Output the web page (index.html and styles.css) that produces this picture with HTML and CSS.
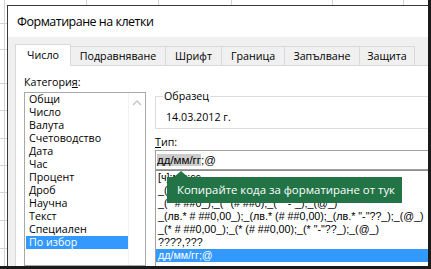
FILE: index.html
```html
<!DOCTYPE html>
<html lang="bg">
<head>
<meta charset="utf-8">
<title>Форматиране на клетки</title>
<link rel="stylesheet" href="styles.css">
</head>
<body>
<div class="frame">
  <div class="dialog">
    <div class="titlebar">Форматиране на клетки</div>
    <div class="dlg-body">
      <div class="tabs">
        <div class="tab active">Число</div>
        <div class="tab">Подравняване</div>
        <div class="tab">Шрифт</div>
        <div class="tab">Граница</div>
        <div class="tab">Запълване</div>
        <div class="tab">Защита</div>
      </div>
      <div class="panel">
        <div class="col-left">
          <div class="label">Категори<u>я</u>:</div>
          <div class="listbox">
            <ul class="cat-list">
              <li>Общи</li>
              <li>Число</li>
              <li>Валута</li>
              <li>Счетоводство</li>
              <li>Дата</li>
              <li>Час</li>
              <li>Процент</li>
              <li>Дроб</li>
              <li>Научна</li>
              <li>Текст</li>
              <li>Специален</li>
              <li class="sel">По избор</li>
            </ul>
            <div class="vscroll">
              <svg class="chev" width="10" height="6" viewBox="0 0 10 6"><path d="M1 5 L5 1 L9 5" fill="none" stroke="#c4c4c4" stroke-width="1.4"/></svg>
            </div>
          </div>
        </div>
        <div class="col-right">
          <fieldset class="sample">
            <legend>Образец</legend>
            <div class="sample-val">14.03.2012 г.</div>
          </fieldset>
          <div class="label type-label"><u>Т</u>ип:</div>
          <div class="type-input"><span class="seltext">дд/мм/гг</span>;@</div>
          <ul class="fmt-list">
            <li>[ч]:мм:сс</li>
            <li>_(лв.* # ##0_);_(лв.* (# ##0);_(лв.* "-"_);_(@_)</li>
            <li>_(* # ##0_);_(* (# ##0);_(* "-"_);_(@_)</li>
            <li>_(лв.* # ##0,00_);_(лв.* (# ##0,00);_(лв.* "-"??_);_(@_)</li>
            <li>_(* # ##0,00_);_(* (# ##0,00);_(* "-"??_);_(@_)</li>
            <li>????,???</li>
            <li class="sel">дд/мм/гг;@</li>
          </ul>
        </div>
      </div>
    </div>
  </div>
  <div class="tooltip">Копирайте кода за форматиране от тук</div>
</div>
</body>
</html>
```

FILE: styles.css
```css
* { box-sizing: border-box; }

html, body {
  margin: 0;
  padding: 0;
  background: #fff;
}

.frame {
  position: relative;
  width: 431px;
  height: 269px;
  overflow: hidden;
  border-right: 3px solid #1a1a1a;
  border-bottom: 3px solid #1a1a1a;
  background-color: #fff;
  background-image:
    linear-gradient(to right, transparent 4px, #d4d4d4 4px 5px, transparent 5px 86px, #d4d4d4 86px 87px, transparent 87px 158px, #d4d4d4 158px 159px, transparent 159px 231px, #d4d4d4 231px 232px, transparent 232px 332px, #d4d4d4 332px 333px, transparent 333px 403px, #d4d4d4 403px 404px, transparent 404px),
    linear-gradient(to bottom, transparent 23px, #d4d4d4 23px 24px, transparent 24px 49px, #d4d4d4 49px 50px, transparent 50px 83px, #d4d4d4 83px 84px, transparent 84px 110px, #d4d4d4 110px 111px, transparent 111px 138px, #d4d4d4 138px 139px, transparent 139px 165px, #d4d4d4 165px 166px, transparent 166px 192px, #d4d4d4 192px 193px, transparent 193px 220px, #d4d4d4 220px 221px, transparent 221px 248px, #d4d4d4 248px 249px, transparent 249px);
  font-family: "Open Sans", "Noto Sans", sans-serif;
  font-size: 10.7px;
  color: #000;
}

.dialog {
  margin: 5px 0 0 7px;
  height: 261px;
  display: flex;
  flex-direction: column;
  border-top: 1px solid #3a3a3a;
  border-left: 1px solid #3a3a3a;
  background: #fff;
}

.titlebar {
  height: 31px;
  line-height: 31px;
  padding-left: 9px;
  font-size: 12.5px;
  letter-spacing: -0.5px;
  background: #fff;
  color: #000;
}

.dlg-body {
  flex: 1;
  display: flex;
  flex-direction: column;
  background: #f0f0f0;
  padding: 7px 0 0 7px;
  min-height: 0;
}

.tabs {
  display: flex;
  align-items: flex-end;
  height: 21px;
}

.tab {
  height: 19px;
  line-height: 18px;
  text-align: center;
  border-top: 1px solid #d9d9d9;
  border-right: 1px solid #d9d9d9;
  background: #f0f0f0;
  white-space: nowrap;
}

.tab:nth-child(1) { width: 56px; }
.tab:nth-child(2) { width: 95px; }
.tab:nth-child(3) { width: 56px; }
.tab:nth-child(4) { width: 63px; }
.tab:nth-child(5) { width: 75px; }
.tab:nth-child(6) { width: 55px; }

.tab.active {
  height: 22px;
  margin-bottom: -1px;
  line-height: 20px;
  border-left: 1px solid #d9d9d9;
  background: #fff;
  position: relative;
  z-index: 1;
}

.panel {
  flex: 1;
  display: flex;
  gap: 9px;
  background: #fff;
  border-top: 1px solid #d9d9d9;
  border-left: 1px solid #d9d9d9;
  padding: 9px 0 0 8px;
  min-height: 0;
  overflow: hidden;
}

.label {
  height: 15px;
  line-height: 15px;
  white-space: nowrap;
}

.col-left {
  width: 122px;
  flex: none;
  display: flex;
  flex-direction: column;
}

.listbox {
  margin-top: 2px;
  flex: 1;
  display: flex;
  border: 1px solid #a9a9a9;
  background: #fff;
}

.cat-list {
  flex: 1;
  list-style: none;
  margin: 0;
  padding: 0 0 0 1px;
}

.cat-list li {
  height: 13px;
  line-height: 13px;
  padding-left: 3px;
  white-space: nowrap;
}

.cat-list li.sel,
.fmt-list li.sel {
  background: #3399ff;
  color: #fff;
}

.vscroll {
  width: 17px;
  flex: none;
  display: flex;
  justify-content: center;
  padding-top: 7px;
  border-left: 1px solid #f3f3f3;
}

.chev { display: block; }

.col-right {
  width: 300px;
  flex: none;
  display: flex;
  flex-direction: column;
}

.sample {
  margin: 14px 0 0 0;
  padding: 6px 0 3px 10px;
  border: 1px solid #dcdcdc;
  min-width: 0;
}

.sample legend {
  padding: 0 1px;
  margin-left: -3px;
  line-height: 15px;
}

.sample-val {
  line-height: 15px;
}

.type-label {
  margin-top: 6px;
}

.type-input {
  height: 20px;
  border: 1px solid #a0a0a0;
  border-right: none;
  padding-left: 1px;
  font-family: "Liberation Sans", Arial, sans-serif;
  font-size: 11.5px;
  line-height: 18px;
  white-space: nowrap;
}

.seltext {
  background: #cccccc;
}

.fmt-list {
  list-style: none;
  margin: 0;
  padding: 0;
  flex: 1;
  border-left: 1px solid #a0a0a0;
  border-top: 1px solid #8c8c8c;
  font-family: "Liberation Sans", Arial, sans-serif;
  font-size: 10.7px;
}

.fmt-list li {
  height: 13px;
  line-height: 13px;
  padding-left: 2px;
  white-space: nowrap;
}

.tooltip {
  position: absolute;
  left: 167px;
  top: 177px;
  width: 235px;
  height: 26px;
  line-height: 26px;
  padding-left: 10px;
  background: #227447;
  color: #fff;
  font-size: 11.4px;
  white-space: nowrap;
}

.tooltip::before {
  content: "";
  position: absolute;
  left: 7px;
  top: -6px;
  border-left: 7px solid transparent;
  border-right: 7px solid transparent;
  border-bottom: 6px solid #227447;
}
```
